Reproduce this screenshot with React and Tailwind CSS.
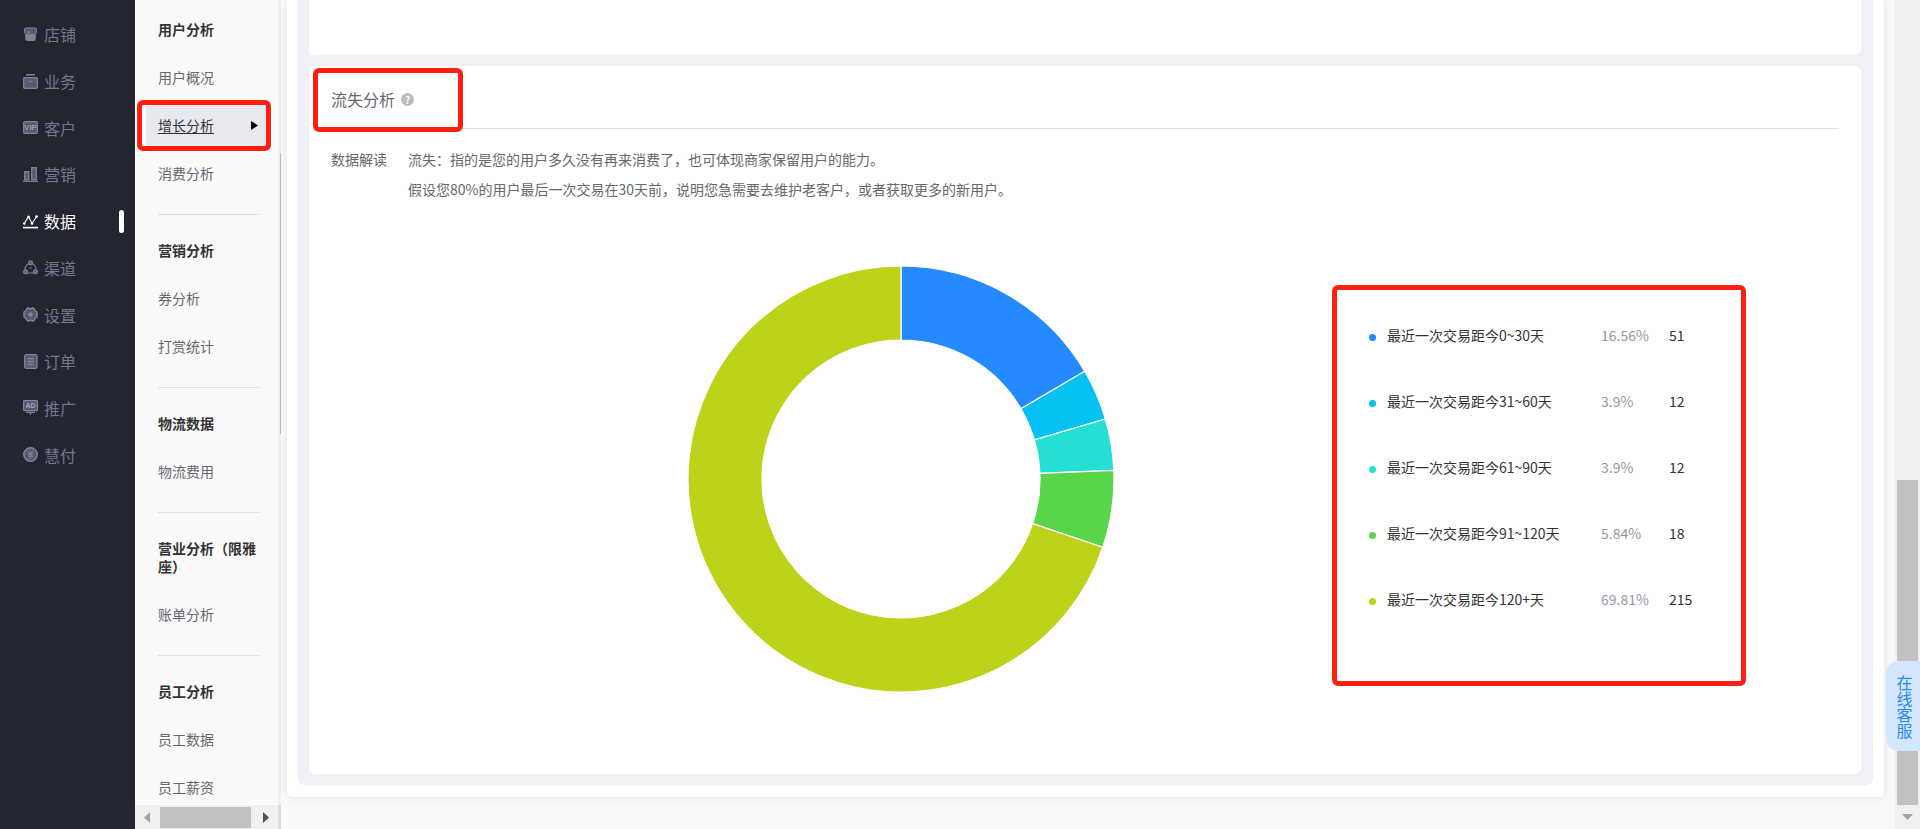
import React, { useState } from "react";

const iconTone = "#80839b";
const iconFill = "#56596f";

const StoreIcon = () => (
  <svg viewBox="0 0 15 15" className="w-[15px] h-[15px] shrink-0">
    <path d="M2.2 6h10.600v5.500a2.500 2.500 0 0 1-2.500 2.500H4.700a2.500 2.500 0 0 1-2.500-2.500z" fill={iconTone} />
    <path d="M2.800 1h9.400a1.300 1.300 0 0 1 1.300 1.300v3a2 2 0 0 1-2 2h-8a2 2 0 0 1-2-2v-3A1.300 1.300 0 0 1 2.800 1z" fill={iconFill} stroke={iconTone} />
    <path d="M4 5.200h3.500" stroke={iconTone} strokeWidth="1.500" />
  </svg>
);

const BriefcaseIcon = () => (
  <svg viewBox="0 0 15 15" className="w-[15px] h-[15px] shrink-0">
    <path d="M3 .8h9" stroke={iconTone} strokeWidth="1.500" />
    <rect x=".7" y="3.700" width="13.600" height="10.600" rx="1" fill={iconFill} stroke={iconTone} strokeWidth="1.300" />
    <path d="M5.500 7.500h4" stroke={iconTone} strokeWidth="1.400" />
  </svg>
);

const VipIcon = () => (
  <svg viewBox="0 0 15 15" className="w-[15px] h-[15px] shrink-0">
    <rect x=".6" y="1.600" width="13.800" height="11.800" rx="1.500" fill={iconFill} stroke={iconTone} strokeWidth="1.200" />
    <text x="7.500" y="10.300" textAnchor="middle" fontSize="8" fontWeight="700" fontFamily="Liberation Sans, sans-serif" fill="#9699ad">VIP</text>
  </svg>
);

const BarsIcon = () => (
  <svg viewBox="0 0 15 15" className="w-[15px] h-[15px] shrink-0" fill={iconFill} stroke={iconTone} strokeWidth="1.300">
    <rect x="1.700" y="4.700" width="4.100" height="8" />
    <rect x="8.700" y=".7" width="4.600" height="12" />
    <path d="M0 14.300h15" />
  </svg>
);

const TrendIcon = () => (
  <svg viewBox="0 0 15 15" className="w-[15px] h-[15px] shrink-0" fill="#fff" stroke="#fff">
    <path d="M1 10l4.500-7.500L9 9.500l5-7.500" fill="none" strokeWidth="1.100" />
    <g stroke="none">
      <circle cx="1.400" cy="9.500" r="1.300" />
      <circle cx="5.500" cy="3" r="1.300" />
      <circle cx="9" cy="9.500" r="1.300" />
      <circle cx="13.600" cy="2.500" r="1.300" />
    </g>
    <path d="M0 13.600h15" strokeWidth="1.600" />
  </svg>
);

const ChannelIcon = () => (
  <svg viewBox="0 0 15 15" className="w-[15px] h-[15px] shrink-0" fill={iconFill} stroke={iconTone} strokeWidth="1.200">
    <path d="M5.500 4A6 6 0 0 0 2 9.500M9.500 4A6 6 0 0 1 13 9.500M4.500 13h6" fill="none" />
    <circle cx="7.500" cy="2.700" r="1.900" />
    <circle cx="2.600" cy="11.700" r="1.900" />
    <circle cx="12.400" cy="11.700" r="1.900" />
    <circle cx="7.500" cy="8" r="1.200" stroke="none" />
  </svg>
);

const GearIcon = () => (
  <svg viewBox="0 0 15 15" className="w-[15px] h-[15px] shrink-0">
    <path
      d="M5.200.8l2.300 1.100L9.800.8l1.700 1.200.5 1.800 1.700.8.6 2L13.200 7.500l1.100 1-.6 2-1.700.8-.5 1.700-1.700 1.200-2.300-1.100-2.300 1.100L3.500 13 3 11.300l-1.700-.8-.6-2 1.100-1-1.100-1 .6-2L3 3.800 3.500 2z"
      fill={iconFill}
      stroke={iconTone}
      strokeWidth="1.300"
    />
    <circle cx="7.500" cy="7.500" r="2.200" fill={iconTone} />
  </svg>
);

const OrderIcon = () => (
  <svg viewBox="0 0 15 15" className="w-[15px] h-[15px] shrink-0" stroke={iconTone} strokeWidth="1.300">
    <rect x="1.700" y=".7" width="12.300" height="13.600" rx="1.500" fill={iconFill} />
    <path d="M4.500 4.500h6.500M4.500 7.500h6.500M4.500 10.500h6.500" />
  </svg>
);

const AdIcon = () => (
  <svg viewBox="0 0 15 15" className="w-[15px] h-[15px] shrink-0" stroke={iconTone} strokeWidth="1.200">
    <rect x=".6" y=".6" width="13.800" height="10" rx=".8" fill={iconFill} />
    <path d="M3 12.400h9M7.500 12v3" />
    <text x="7.500" y="8.200" textAnchor="middle" fontSize="7" fontWeight="700" fontFamily="Liberation Sans, sans-serif" fill="#a3a6b8" stroke="none">AD</text>
  </svg>
);

const PayIcon = () => (
  <svg viewBox="0 0 15 15" className="w-[15px] h-[15px] shrink-0" stroke={iconTone}>
    <circle cx="7.500" cy="7.500" r="6.700" fill={iconFill} strokeWidth="1.500" />
    <path d="M5 4l2.500 3L10 4M7.500 7v4.500M4.800 7.300h5.400M4.800 9.300h5.400" fill="none" strokeWidth="1.100" />
  </svg>
);

const navItems = [
  { id: "store", label: "店铺", icon: StoreIcon },
  { id: "business", label: "业务", icon: BriefcaseIcon },
  { id: "customer", label: "客户", icon: VipIcon },
  { id: "marketing", label: "营销", icon: BarsIcon },
  { id: "data", label: "数据", icon: TrendIcon },
  { id: "channel", label: "渠道", icon: ChannelIcon },
  { id: "settings", label: "设置", icon: GearIcon },
  { id: "orders", label: "订单", icon: OrderIcon },
  { id: "promotion", label: "推广", icon: AdIcon },
  { id: "pay", label: "慧付", icon: PayIcon }
];

const menuGroups = [
  { title: "用户分析", items: ["用户概况", "增长分析", "消费分析"] },
  { title: "营销分析", items: ["券分析", "打赏统计"] },
  { title: "物流数据", items: ["物流费用"] },
  { title: "营业分析（限雅座）", items: ["账单分析"] },
  { title: "员工分析", items: ["员工数据", "员工薪资"] }
];

const churn = [
  { label: "最近一次交易距今0~30天", percent: "16.56%", count: 51, color: "#2589ff" },
  { label: "最近一次交易距今31~60天", percent: "3.9%", count: 12, color: "#05c1f2" },
  { label: "最近一次交易距今61~90天", percent: "3.9%", count: 12, color: "#25dfd3" },
  { label: "最近一次交易距今91~120天", percent: "5.84%", count: 18, color: "#5ad54b" },
  { label: "最近一次交易距今120+天", percent: "69.81%", count: 215, color: "#bcd319" }
];

function Donut({ data }) {
  const outer = 213;
  const inner = 139;
  const total = data.reduce((sum, d) => sum + d.count, 0);
  const point = (r, t) => `${r * Math.sin(t * 2 * Math.PI)} ${-r * Math.cos(t * 2 * Math.PI)}`;

  let start = 0;
  const slices = data.map((d) => {
    const end = start + d.count / total;
    const large = end - start > 0.5 ? 1 : 0;
    const path = `M${point(outer, start)}A${outer} ${outer} 0 ${large} 1 ${point(outer, end)}L${point(inner, end)}A${inner} ${inner} 0 ${large} 0 ${point(inner, start)}Z`;
    start = end;
    return { ...d, path };
  });

  return (
    <svg viewBox="-214 -214 428 428" className="w-[428px] h-[428px] shrink-0" role="img" aria-label="流失分析">
      {slices.map((s) => (
        <path key={s.label} d={s.path} fill={s.color} stroke="#fff" strokeWidth="1.2" />
      ))}
    </svg>
  );
}

function Sidebar({ activeTab, setActiveTab }) {
  return (
    <aside className="w-[135px] shrink-0 bg-[#232530] pt-[11px]">
      <nav className="h-[467px] flex flex-col">
        {navItems.map((item) => {
          const Icon = item.icon;
          const isActive = activeTab === item.id;

          return (
            <button
              key={item.id}
              type="button"
              onClick={() => setActiveTab(item.id)}
              className={`flex-1 flex items-center gap-1.5 pl-[23px] pr-[11px] text-base leading-6 cursor-pointer ${
                isActive ? "text-white" : "text-[#74778f]"
              }`}
            >
              <Icon />
              <span>{item.label}</span>
              {isActive && <span className="ml-auto w-[5px] h-[23px] rounded-sm bg-white" />}
            </button>
          );
        })}
      </nav>
    </aside>
  );
}

function SubMenu() {
  const [active, setActive] = useState("增长分析");

  return (
    <div className="w-[146px] shrink-0 flex flex-col bg-[#fafafa] text-sm">
      <div className="flex-1 min-h-0 flex">
        <nav className="flex-1 min-w-0 overflow-hidden pt-[5px]">
          {menuGroups.map((group, i) => (
            <div key={group.title}>
              {i > 0 && <hr className="ml-[23px] mr-[19px] mt-[17px] mb-[11px] border-[#e0e0e2]" />}
              <h3 className="pl-[23px] pr-[17px] py-[15px] font-bold leading-[18px] text-[#333]">{group.title}</h3>
              {group.items.map((name) => {
                const isActive = active === name;
                return (
                  <div key={name} className="relative pl-[11px] pr-2">
                    <a
                      href="#menu"
                      onClick={() => setActive(name)}
                      className={`flex items-center justify-between h-12 pl-3 pr-3 rounded-md ${
                        isActive ? "bg-[#e8e9ef] text-[#333] underline underline-offset-2" : "text-[#66676f]"
                      }`}
                    >
                      {name}
                      {isActive && (
                        <svg viewBox="0 0 7 9" className="w-[7px] h-[9px]">
                          <path d="M0 0l7 4.500L0 9z" fill="#000" />
                        </svg>
                      )}
                    </a>
                    {isActive && (
                      <div className="absolute -top-px left-0.5 right-[7px] h-[51px] border-[5px] border-[#ff1f10] rounded-md pointer-events-none" />
                    )}
                  </div>
                );
              })}
            </div>
          ))}
        </nav>
        <div className="w-[3px] bg-[#f0f0f0] flex flex-col items-end pt-[153px]">
          <div className="w-px h-[281px] bg-[#b9b9b9]" />
        </div>
      </div>

      {/* Horizontal scrollbar */}
      <div className="h-6 flex items-center bg-[#f0f0f0]">
        <svg viewBox="0 0 6 11" className="w-1.5 h-[11px] ml-[9px]">
          <path d="M6 0v11L0 5.500z" fill="#a3a3a3" />
        </svg>
        <div className="w-[91px] h-[21px] ml-2.5 bg-[#c1c1c1]" />
        <svg viewBox="0 0 6 11" className="w-1.5 h-[11px] ml-3">
          <path d="M0 0v11l6-5.500z" fill="#505050" />
        </svg>
        <div className="w-[3px] h-6 ml-auto bg-[#dcdcdc]" />
      </div>
    </div>
  );
}

function ChurnCard() {
  return (
    <section className="relative bg-white rounded-md px-[22px] pb-[81px] text-sm text-[#66676f]">
      <div className="h-[63px] flex items-center gap-1.5 pt-1 border-b border-[#e0e0e2]">
        <h2 className="text-base">流失分析</h2>
        <button
          type="button"
          title="说明"
          className="w-[13px] h-[13px] rounded-full bg-[#bbb] text-white text-[10px] leading-[13px] font-bold cursor-pointer"
        >
          ?
        </button>
      </div>
      <div className="absolute top-0.5 left-1 w-[150px] h-16 border-[5px] border-[#ff1f10] rounded-md pointer-events-none" />

      <div className="flex pt-[15px] leading-[30px]">
        <p className="w-[77px] shrink-0">数据解读</p>
        <div>
          <p>流失：指的是您的用户多久没有再来消费了，也可体现商家保留用户的能力。</p>
          <p>假设您80%的用户最后一次交易在30天前，说明您急需要去维护老客户，或者获取更多的新用户。</p>
        </div>
      </div>

      <div className="flex items-start pt-[61px] -mx-[22px]">
        <div className="flex-1 pl-40 flex justify-center">
          <Donut data={churn} />
        </div>
        <div className="w-[414px] h-[401px] mt-5 mr-[115px] pl-8 pt-3 border-[5px] border-[#ff1f10] rounded-md">
          <table className="text-left">
            <tbody>
              {churn.map((row) => (
                <tr key={row.label} className="h-[66px]">
                  <th scope="row" className="w-[232px] p-0 font-normal text-[#333]">
                    <span className="flex items-center gap-[11px]">
                      <span className="w-[7px] h-[7px] mt-1 rounded-full" style={{ backgroundColor: row.color }} />
                      {row.label}
                    </span>
                  </th>
                  <td className="w-[68px] p-0 text-[#9697a2]">{row.percent}</td>
                  <td className="p-0 text-[#333]">{row.count}</td>
                </tr>
              ))}
            </tbody>
          </table>
        </div>
      </div>
    </section>
  );
}

export default function App() {
  const [activeTab, setActiveTab] = useState("data");

  return (
    <div className="h-screen flex overflow-hidden bg-[#fafafa] font-['Noto_Sans_CJK_SC',sans-serif]">
      <Sidebar activeTab={activeTab} setActiveTab={setActiveTab} />
      <SubMenu />

      <main className="flex-1 min-w-0 pl-1.5 pr-[11px]">
        <div className="bg-white rounded-b-md shadow-[0_0_8px_rgba(0,0,0,0.1)] px-[11px] pb-3">
          <div className="bg-[#f1f0f6] rounded-b-md pl-[11px] pr-3 pb-[11px] flex flex-col gap-[11px]">
            <section className="h-[55px] bg-white rounded-b-md" />
            <ChurnCard />
          </div>
        </div>
      </main>

      {/* Page scrollbar */}
      <div className="w-[25px] shrink-0 bg-[#f0f0f0] flex flex-col items-center justify-end gap-[9px] pb-[9px]">
        <div className="w-[21px] h-[325px] bg-[#c1c1c1]" />
        <svg viewBox="0 0 11 6" className="w-[11px] h-1.5">
          <path d="M0 0h11L5.500 6z" fill="#a3a3a3" />
        </svg>
      </div>

      <button
        type="button"
        className="fixed right-0 bottom-[78px] w-[34px] h-[90px] pl-[3px] flex flex-col items-center justify-center rounded-l-xl bg-[#d5e7ff] text-base leading-4 text-[#2589ff] cursor-pointer"
      >
        <span className="w-4 break-all">在线客服</span>
      </button>
    </div>
  );
}
